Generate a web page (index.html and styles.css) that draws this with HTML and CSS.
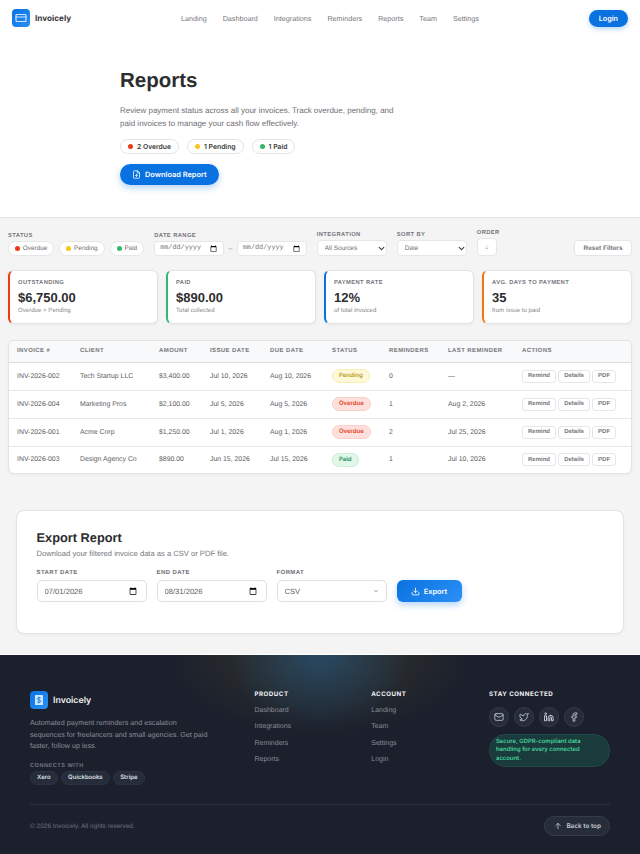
FILE: index.html
```html
<!DOCTYPE html>
<html lang="en">
<head>
    <meta charset="UTF-8">
    <meta name="viewport" content="width=device-width, initial-scale=1.0">
    <title>Reports - Invoicely</title>
    <link rel="stylesheet" href="styles.css">
</head>
<body>
    <header class="topbar">
        <a class="brand" href="#">
            <span class="brandIcon">
                <svg viewBox="0 0 24 24" width="12" height="12" fill="none" stroke="#cfe5ff" stroke-width="2.4" stroke-linecap="round" stroke-linejoin="round"><rect x="2" y="5" width="20" height="14" rx="2"/><line x1="2" y1="10" x2="22" y2="10"/></svg>
            </span>
            <span class="brandName">Invoicely</span>
        </a>
        <nav class="topLinks">
            <a href="#">Landing</a>
            <a href="#">Dashboard</a>
            <a href="#">Integrations</a>
            <a href="#">Reminders</a>
            <a href="#">Reports</a>
            <a href="#">Team</a>
            <a href="#">Settings</a>
        </nav>
        <a class="loginBtn" href="#">Login</a>
    </header>

    <section class="hero">
        <h1>Reports</h1>
        <p>Review payment status across all your invoices. Track overdue, pending, and paid invoices to manage your cash flow effectively.</p>
        <div class="heroPills">
            <span class="heroPill"><i class="dot dotRed"></i>2 Overdue</span>
            <span class="heroPill"><i class="dot dotYellow"></i>1 Pending</span>
            <span class="heroPill"><i class="dot dotGreen"></i>1 Paid</span>
        </div>
        <a class="downloadBtn" href="#">
            <svg viewBox="0 0 24 24" width="9" height="9" fill="none" stroke="#fff" stroke-width="2" stroke-linecap="round" stroke-linejoin="round"><path d="M14 2H6a2 2 0 0 0-2 2v16a2 2 0 0 0 2 2h12a2 2 0 0 0 2-2V8z"/><polyline points="14 2 14 8 20 8"/><line x1="12" y1="18" x2="12" y2="12"/><polyline points="9 15 12 12 15 15"/></svg>
            Download Report
        </a>
    </section>

    <main class="content">
        <div class="filters">
            <div class="filterGroup">
                <label>Status</label>
                <div class="statusPills">
                    <button type="button" class="statusPill"><i class="dot dotRed"></i>Overdue</button>
                    <button type="button" class="statusPill"><i class="dot dotYellow"></i>Pending</button>
                    <button type="button" class="statusPill"><i class="dot dotGreen"></i>Paid</button>
                </div>
            </div>
            <div class="filterGroup">
                <label>Date Range</label>
                <div class="dateRange">
                    <input type="date" class="filterInput">
                    <span>↔</span>
                    <input type="date" class="filterInput">
                </div>
            </div>
            <div class="filterGroup">
                <label>Integration</label>
                <div class="selectWrap">
                    <select class="filterSelect"><option>All Sources</option></select>
                    <svg class="filterChevron" viewBox="0 0 24 24" width="7" height="7" fill="none" stroke="#444" stroke-width="4" stroke-linecap="round" stroke-linejoin="round"><polyline points="4 8 12 16 20 8"/></svg>
                </div>
            </div>
            <div class="filterGroup">
                <label>Sort By</label>
                <div class="selectWrap">
                    <select class="filterSelect"><option>Date</option></select>
                    <svg class="filterChevron" viewBox="0 0 24 24" width="7" height="7" fill="none" stroke="#444" stroke-width="4" stroke-linecap="round" stroke-linejoin="round"><polyline points="4 8 12 16 20 8"/></svg>
                </div>
            </div>
            <div class="filterGroup">
                <label>Order</label>
                <button type="button" class="orderBtn">↓</button>
            </div>
            <button type="button" class="resetBtn">Reset Filters</button>
        </div>

        <div class="stats">
            <div class="statCard statRed">
                <div class="statLabel">Outstanding</div>
                <div class="statValue">$6,750.00</div>
                <div class="statSub">Overdue + Pending</div>
            </div>
            <div class="statCard statGreen">
                <div class="statLabel">Paid</div>
                <div class="statValue">$890.00</div>
                <div class="statSub">Total collected</div>
            </div>
            <div class="statCard statBlue">
                <div class="statLabel">Payment Rate</div>
                <div class="statValue">12%</div>
                <div class="statSub">of total invoiced</div>
            </div>
            <div class="statCard statOrange">
                <div class="statLabel">Avg. Days to Payment</div>
                <div class="statValue">35</div>
                <div class="statSub">from issue to paid</div>
            </div>
        </div>

        <div class="tableWrap">
            <table class="invoiceTable">
                <colgroup>
                    <col class="colInvoice"><col class="colClient"><col class="colAmount"><col class="colIssue"><col class="colDue"><col class="colStatus"><col class="colReminders"><col class="colLast"><col>
                </colgroup>
                <thead>
                    <tr>
                        <th>Invoice #</th><th>Client</th><th>Amount</th><th>Issue Date</th><th>Due Date</th><th>Status</th><th>Reminders</th><th>Last Reminder</th><th>Actions</th>
                    </tr>
                </thead>
                <tbody>
                    <tr>
                        <td>INV-2026-002</td><td>Tech Startup LLC</td><td>$3,400.00</td><td>Jul 10, 2026</td><td>Aug 10, 2026</td>
                        <td><span class="badge badgePending">Pending</span></td><td>0</td><td>—</td>
                        <td class="actions"><button type="button">Remind</button><button type="button">Details</button><button type="button">PDF</button></td>
                    </tr>
                    <tr>
                        <td>INV-2026-004</td><td>Marketing Pros</td><td>$2,100.00</td><td>Jul 5, 2026</td><td>Aug 5, 2026</td>
                        <td><span class="badge badgeOverdue">Overdue</span></td><td>1</td><td>Aug 2, 2026</td>
                        <td class="actions"><button type="button">Remind</button><button type="button">Details</button><button type="button">PDF</button></td>
                    </tr>
                    <tr>
                        <td>INV-2026-001</td><td>Acme Corp</td><td>$1,250.00</td><td>Jul 1, 2026</td><td>Aug 1, 2026</td>
                        <td><span class="badge badgeOverdue">Overdue</span></td><td>2</td><td>Jul 25, 2026</td>
                        <td class="actions"><button type="button">Remind</button><button type="button">Details</button><button type="button">PDF</button></td>
                    </tr>
                    <tr>
                        <td>INV-2026-003</td><td>Design Agency Co</td><td>$890.00</td><td>Jun 15, 2026</td><td>Jul 15, 2026</td>
                        <td><span class="badge badgePaid">Paid</span></td><td>1</td><td>Jul 10, 2026</td>
                        <td class="actions"><button type="button">Remind</button><button type="button">Details</button><button type="button">PDF</button></td>
                    </tr>
                </tbody>
            </table>
        </div>

        <section class="exportCard">
            <h2>Export Report</h2>
            <p>Download your filtered invoice data as a CSV or PDF file.</p>
            <form class="exportForm">
                <div class="exportField">
                    <label for="startDate">Start Date</label>
                    <input type="date" id="startDate" value="2026-07-01">
                </div>
                <div class="exportField">
                    <label for="endDate">End Date</label>
                    <input type="date" id="endDate" value="2026-08-31">
                </div>
                <div class="exportField">
                    <label for="format">Format</label>
                    <div class="selectWrap">
                        <select id="format"><option>CSV</option><option>PDF</option></select>
                        <svg class="chevron" viewBox="0 0 24 24" width="6" height="6" fill="none" stroke="#666" stroke-width="2.5" stroke-linecap="round" stroke-linejoin="round"><polyline points="6 9 12 15 18 9"/></svg>
                    </div>
                </div>
                <button type="button" class="exportBtn">
                    <svg viewBox="0 0 24 24" width="9" height="9" fill="none" stroke="#fff" stroke-width="2.2" stroke-linecap="round" stroke-linejoin="round"><path d="M21 15v4a2 2 0 0 1-2 2H5a2 2 0 0 1-2-2v-4"/><polyline points="7 10 12 15 17 10"/><line x1="12" y1="15" x2="12" y2="3"/></svg>
                    Export
                </button>
            </form>
        </section>
    </main>

    <footer class="footer">
        <div class="footerTop">
            <div class="footerBrand">
                <div class="footerLogo">
                    <span class="footerIcon">
                        <svg viewBox="0 0 24 24" width="12" height="12" fill="#cfe5ff"><path d="M5 2h14a1 1 0 0 1 1 1v18a1 1 0 0 1-1 1H5a1 1 0 0 1-1-1V3a1 1 0 0 1 1-1z"/><path d="M15.5 8.5c-.6-.9-1.9-1.5-3.5-1.5-2 0-3.5 1-3.5 2.5S10 11.7 12 12s3.5 1 3.5 2.5S14 17 12 17c-1.600 0-2.900-.6-3.500-1.500M12 5.500v13" fill="none" stroke="#1b7fe8" stroke-width="2"/></svg>
                    </span>
                    <span>Invoicely</span>
                </div>
                <p>Automated payment reminders and escalation sequences for freelancers and small agencies. Get paid faster, follow up less.</p>
                <div class="connectsLabel">Connects With</div>
                <div class="connects">
                    <span>Xero</span><span>Quickbooks</span><span>Stripe</span>
                </div>
            </div>
            <div class="footerCol footerProduct">
                <h4>Product</h4>
                <a href="#">Dashboard</a>
                <a href="#">Integrations</a>
                <a href="#">Reminders</a>
                <a href="#">Reports</a>
            </div>
            <div class="footerCol footerAccount">
                <h4>Account</h4>
                <a href="#">Landing</a>
                <a href="#">Team</a>
                <a href="#">Settings</a>
                <a href="#">Login</a>
            </div>
            <div class="footerCol footerStay">
                <h4>Stay Connected</h4>
                <div class="socials">
                    <a href="#"><svg viewBox="0 0 24 24" width="10" height="10" fill="none" stroke="#c3c8d2" stroke-width="2" stroke-linecap="round" stroke-linejoin="round"><rect x="2" y="4" width="20" height="16" rx="3"/><polyline points="22 7 12 13 2 7"/></svg></a>
                    <a href="#"><svg viewBox="0 0 24 24" width="10" height="10" fill="none" stroke="#c3c8d2" stroke-width="2" stroke-linecap="round" stroke-linejoin="round"><path d="M22 4s-.7 2.1-2 3.4c1.600 10-9.400 17.300-18 11.600 2.200.1 4.400-.6 6-2C3 15.500.5 9.600 3 5c2.200 2.600 5.600 4.100 9 4-.9-4.200 4-6.600 7-3.800 1.100 0 3-1.200 3-1.200z"/></svg></a>
                    <a href="#"><svg viewBox="0 0 24 24" width="10" height="10" fill="none" stroke="#c3c8d2" stroke-width="2.4" stroke-linecap="round" stroke-linejoin="round"><path d="M16 8a6 6 0 0 1 6 6v7h-4v-7a2 2 0 0 0-4 0v7h-4v-7a6 6 0 0 1 6-6z"/><rect x="2" y="9" width="4" height="12"/><circle cx="4" cy="4" r="2"/></svg></a>
                    <a href="#"><svg viewBox="0 0 24 24" width="10" height="10" fill="none" stroke="#c3c8d2" stroke-width="2" stroke-linecap="round" stroke-linejoin="round"><path d="M18 2h-3a5 5 0 0 0-5 5v3H7v4h3v8h4v-8h3l1-4h-4V7a1 1 0 0 1 1-1h3z"/></svg></a>
                </div>
                <div class="gdpr">Secure, GDPR-compliant data handling for every connected account.</div>
            </div>
        </div>
        <div class="footerBottom">
            <span class="copyright">© 2026 Invoicely. All rights reserved.</span>
            <a class="backTop" href="#">
                <svg viewBox="0 0 24 24" width="8" height="8" fill="none" stroke="#c3c8d2" stroke-width="2.4" stroke-linecap="round" stroke-linejoin="round"><line x1="12" y1="20" x2="12" y2="4"/><polyline points="5 11 12 4 19 11"/></svg>
                Back to top
            </a>
        </div>
    </footer>
</body>
</html>
```

FILE: styles.css
```css
* {
    box-sizing: border-box;
}

body {
    margin: 0;
    background: #f4f4f5;
    font-family: 'Liberation Sans', Arial, sans-serif;
    color: #2d2d2f;
    text-rendering: geometricPrecision;
}

a {
    text-decoration: none;
    color: inherit;
}

button, input, select {
    font-family: inherit;
    text-rendering: geometricPrecision;
}

/* browser default field padding looks too big at these sizes */
input::-webkit-datetime-edit-month-field,
input::-webkit-datetime-edit-day-field,
input::-webkit-datetime-edit-year-field,
input::-webkit-datetime-edit-text {
    padding: 0;
}

.topbar {
    display: flex;
    align-items: center;
    justify-content: space-between;
    height: 36px;
    padding: 0 12px;
    background: #fff;
}

.brand {
    display: flex;
    align-items: center;
    gap: 5px;
}

.brandIcon {
    display: flex;
    align-items: center;
    justify-content: center;
    width: 18px;
    height: 18px;
    border-radius: 4px;
    background: linear-gradient(135deg, #0a72e0, #2a90f5);
}

.brandName {
    font-family: Inter, sans-serif;
    font-weight: 700;
    font-size: 8.2px;
    color: #3a3a3c;
}

.topLinks {
    display: flex;
    gap: 16px;
    font-size: 7.2px;
    color: #77777c;
}

.loginBtn {
    display: flex;
    align-items: center;
    height: 17px;
    padding: 0 10px;
    border-radius: 9px;
    background: #0a72e0;
    color: #fff;
    font-family: Inter, sans-serif;
    font-weight: 600;
    font-size: 7.2px;
    box-shadow: 0 2px 5px rgba(10, 114, 224, 0.3);
}

.hero {
    height: 182px;
    padding: 34px 120px 0;
    background: #fff;
    border-bottom: 1px solid #e2e3e4;
}

.hero h1 {
    margin: 0 0 12px;
    font-size: 20.5px;
    line-height: 22px;
    color: #2d2d2f;
}

.hero p {
    margin: 0 0 9px;
    width: 280px;
    font-size: 8px;
    line-height: 13px;
    color: #6e6e73;
}

.heroPills {
    display: flex;
    gap: 8px;
    margin-bottom: 10px;
}

.heroPill {
    display: flex;
    align-items: center;
    gap: 4px;
    height: 15px;
    padding: 0 7px;
    border: 1px solid #e3e3e5;
    border-radius: 8px;
    background: #fff;
    font-family: Inter, sans-serif;
    font-weight: 600;
    font-size: 6.8px;
    color: #3a3a3c;
}

.dot {
    display: block;
    flex: none;
    width: 5px;
    height: 5px;
    border-radius: 50%;
}

.dotRed { background: #ee3a12; }
.dotYellow { background: #fbc51b; }
.dotGreen { background: #31b96c; }

.downloadBtn {
    display: inline-flex;
    align-items: center;
    gap: 4px;
    height: 21px;
    padding: 0 12px;
    border-radius: 11px;
    background: #0a72e0;
    color: #fff;
    font-family: Inter, sans-serif;
    font-weight: 600;
    font-size: 7.4px;
    box-shadow: 0 3px 7px rgba(10, 114, 224, 0.3);
}

.content {
    padding: 12px 8px 20px;
}

.filters {
    display: flex;
    align-items: flex-end;
    gap: 10px;
    margin-bottom: 14px;
}

.filterGroup {
    display: flex;
    flex-direction: column;
    gap: 2px;
}

.filterGroup label {
    font-size: 5.8px;
    font-weight: 700;
    letter-spacing: 0.4px;
    text-transform: uppercase;
    color: #77777c;
}

.statusPills {
    display: flex;
    gap: 5px;
}

.statusPill {
    display: flex;
    align-items: center;
    gap: 2.8px;
    height: 15px;
    padding: 0 6px;
    border: 1px solid #e6e6e8;
    border-radius: 8px;
    background: #fff;
    font-size: 6.4px;
    color: #6e6e73;
}

.dateRange {
    display: flex;
    align-items: center;
    gap: 3px;
    font-size: 6.6px;
    color: #8a8a8f;
}

.filterInput {
    width: 70px;
    height: 15px;
    padding: 0 4px 0 5px;
    border: 1px solid #e6e6e8;
    border-radius: 4px;
    background: #fff;
    font-family: 'Liberation Mono', monospace;
    font-size: 6.8px;
    color: #77777c;
}

.selectWrap {
    position: relative;
}

.filterSelect {
    display: block;
    width: 70px;
    height: 16px;
    padding: 0 0 0 7px;
    border: 1px solid #e6e6e8;
    border-radius: 4px;
    background: #fff;
    font-size: 6.4px;
    color: #6e6e73;
    appearance: none;
}

.filterChevron {
    position: absolute;
    right: 2px;
    top: 4.5px;
}

.orderBtn {
    width: 20px;
    height: 18px;
    padding: 0;
    border: 1px solid #e6e6e8;
    border-radius: 4px;
    background: #fff;
    font-size: 7px;
    color: #77777c;
}

.resetBtn {
    height: 16px;
    width: 58px;
    margin-left: auto;
    padding: 0;
    border: 1px solid #e6e6e8;
    border-radius: 4px;
    background: #fff;
    font-size: 6.5px;
    font-weight: 700;
    color: #77777c;
}

.stats {
    display: grid;
    grid-template-columns: repeat(4, 1fr);
    gap: 8px;
    margin-bottom: 16px;
}

.statCard {
    height: 54px;
    padding: 9px 8px 0;
    border: 1px solid #e3e3e5;
    border-left: 2px solid #ccc;
    border-radius: 6px;
    background: #fff;
    box-shadow: 0 1px 3px rgba(0, 0, 0, 0.05);
}

.statRed { border-left-color: #ee3a12; }
.statGreen { border-left-color: #31b96c; }
.statBlue { border-left-color: #0a72e0; }
.statOrange { border-left-color: #f2760f; }

.statLabel {
    font-size: 5.8px;
    font-weight: 700;
    line-height: 7px;
    letter-spacing: 0.38px;
    text-transform: uppercase;
    color: #77777c;
}

.statValue {
    margin-top: 2px;
    font-size: 13px;
    font-weight: 700;
    line-height: 17px;
    color: #2d2d2f;
}

.statSub {
    margin-top: 0.5px;
    font-size: 6.1px;
    line-height: 8px;
    color: #8a8a8f;
}

.tableWrap {
    margin-bottom: 36px;
    border: 1px solid #e3e3e5;
    border-radius: 6px;
    background: #fff;
    overflow: hidden;
    box-shadow: 0 1px 3px rgba(0, 0, 0, 0.05);
}

.invoiceTable {
    width: 100%;
    border-collapse: collapse;
    table-layout: fixed;
}

.colInvoice { width: 63px; }
.colClient { width: 79px; }
.colAmount { width: 51px; }
.colIssue { width: 60px; }
.colDue { width: 62px; }
.colStatus { width: 57px; }
.colReminders { width: 59px; }
.colLast { width: 74px; }

.invoiceTable th {
    height: 21px;
    padding: 0 0 0 8px;
    background: #f8f9fa;
    border-bottom: 1px solid #dcdde0;
    text-align: left;
    font-size: 6px;
    font-weight: 700;
    letter-spacing: 0.4px;
    text-transform: uppercase;
    color: #77777c;
}

.invoiceTable td {
    height: 28px;
    padding: 0 0 0 8px;
    border-bottom: 1px solid #e8e8ea;
    font-size: 6.9px;
    color: #5e5e63;
}

.invoiceTable tr:last-child td {
    height: 27px;
    border-bottom: none;
}

.badge {
    display: inline-block;
    height: 14px;
    padding: 0 6px;
    border: 1px solid;
    border-radius: 7px;
    font-family: Inter, sans-serif;
    font-weight: 600;
    font-size: 6px;
    line-height: 12px;
}

.badgePending { background: #fff8d8; border-color: #f8edb0; color: #b79a18; }
.badgeOverdue { background: #fde0dc; border-color: #f9cfc9; color: #e2401d; }
.badgePaid { background: #e1f7ea; border-color: #c8eed8; color: #258a52; }

.actions {
    white-space: nowrap;
}

.actions button {
    height: 13px;
    margin-right: 2.2px;
    padding: 0 5px;
    border: 1px solid #e6e6e8;
    border-radius: 3px;
    background: #fff;
    font-size: 6px;
    font-weight: 700;
    color: #77777c;
}

.exportCard {
    height: 124px;
    margin: 0 8px;
    padding: 20px 19.5px;
    border: 1px solid #e3e3e5;
    border-radius: 8px;
    background: #fff;
    box-shadow: 0 1px 3px rgba(0, 0, 0, 0.05);
}

.exportCard h2 {
    margin: 0;
    font-size: 12.8px;
    line-height: 14px;
    color: #2d2d2f;
}

.exportCard p {
    margin: 4px 0 12px;
    font-size: 7.6px;
    line-height: 9px;
    color: #77777c;
}

.exportForm {
    display: flex;
    align-items: flex-end;
    gap: 10px;
}

.exportField {
    display: flex;
    flex-direction: column;
    gap: 3px;
    width: 110px;
}

.exportField label {
    font-size: 6px;
    font-weight: 700;
    line-height: 7px;
    letter-spacing: 0.4px;
    text-transform: uppercase;
    color: #6e6e73;
}

.exportField input, .exportField select {
    display: block;
    width: 100%;
    height: 22px;
    padding: 0 7px;
    border: 1px solid #e0e0e2;
    border-radius: 5px;
    background: #fff;
    font-size: 7.6px;
    color: #5e5e63;
}

.exportField select {
    appearance: none;
}

.chevron {
    position: absolute;
    right: 8px;
    top: 8px;
}

.exportBtn {
    display: flex;
    align-items: center;
    justify-content: center;
    gap: 4px;
    width: 65px;
    height: 22px;
    border: none;
    border-radius: 6px;
    background: linear-gradient(135deg, #0a72e0, #2a90f5);
    color: #fff;
    font-family: Inter, sans-serif;
    font-weight: 600;
    font-size: 7.4px;
    box-shadow: 0 3px 7px rgba(10, 114, 224, 0.3);
}

.footer {
    height: 200px;
    padding: 36px 30px 0;
    border-top: 1px solid #fff;
    background-color: #1b202c;
    background-image:
        radial-gradient(ellipse 90px 75px at 50% 0, rgba(28, 88, 140, 0.55), rgba(28, 88, 140, 0) 100%),
        radial-gradient(ellipse 150px 80px at 50% 0, rgba(110, 100, 50, 0.32), rgba(110, 100, 50, 0) 100%);
    color: #8a8d96;
}

.footerTop {
    display: flex;
    height: 114px;
    border-bottom: 1px solid #2a3040;
}

.footerBrand {
    width: 225px;
}

.footerLogo {
    display: flex;
    align-items: center;
    gap: 5px;
    font-family: Inter, sans-serif;
    font-weight: 600;
    font-size: 8.8px;
    color: #f1f2f4;
}

.footerIcon {
    display: flex;
    align-items: center;
    justify-content: center;
    width: 18px;
    height: 18px;
    border-radius: 4px;
    background: linear-gradient(135deg, #0a72e0, #2a90f5);
}

.footerBrand p {
    width: 181px;
    margin: 8px 0 0;
    font-size: 7.2px;
    line-height: 11.5px;
}

.connectsLabel {
    margin-top: 11.5px;
    font-size: 5.6px;
    font-weight: 700;
    letter-spacing: 0.5px;
    text-transform: uppercase;
    color: #747988;
}

.connects {
    display: flex;
    gap: 3.5px;
    margin-top: 2px;
}

.connects span {
    height: 14px;
    padding: 0 6px;
    border-radius: 7px;
    border: 1px solid #2d3342;
    background: #262c3a;
    font-family: Inter, sans-serif;
    font-weight: 600;
    font-size: 6px;
    line-height: 12px;
    color: #dfe1e6;
}

.footerCol h4 {
    margin: 0 0 3.5px;
    font-family: Inter, sans-serif;
    font-size: 6.2px;
    font-weight: 700;
    line-height: 8px;
    letter-spacing: 0.5px;
    text-transform: uppercase;
    color: #f1f2f4;
}

.footerCol > a {
    display: block;
    font-size: 7px;
    line-height: 16.5px;
}

.footerProduct {
    width: 117px;
}

.footerAccount {
    width: 118px;
}

.socials {
    display: flex;
    gap: 5px;
    margin-top: 8px;
}

.socials a {
    display: flex;
    align-items: center;
    justify-content: center;
    width: 20px;
    height: 20px;
    border-radius: 50%;
    border: 1px solid #353b4a;
    background: #262c3a;
}

.gdpr {
    width: 121px;
    margin-top: 7px;
    padding: 3px 6px;
    border: 1px solid #1f4a48;
    border-radius: 16px;
    background: #1a3a3c;
    font-family: Inter, sans-serif;
    font-size: 5.9px;
    font-weight: 600;
    line-height: 8.4px;
    color: #43d39a;
}

.footerBottom {
    display: flex;
    align-items: center;
    justify-content: space-between;
    padding-top: 11px;
}

.copyright {
    font-size: 6.5px;
    color: #6d7282;
}

.backTop {
    display: flex;
    align-items: center;
    gap: 4px;
    height: 20px;
    padding: 0 8px 0 9px;
    border: 1px solid #353b4a;
    border-radius: 10px;
    background: #262c3a;
    font-family: Inter, sans-serif;
    font-weight: 600;
    font-size: 6.4px;
    color: #c3c8d2;
}
```
